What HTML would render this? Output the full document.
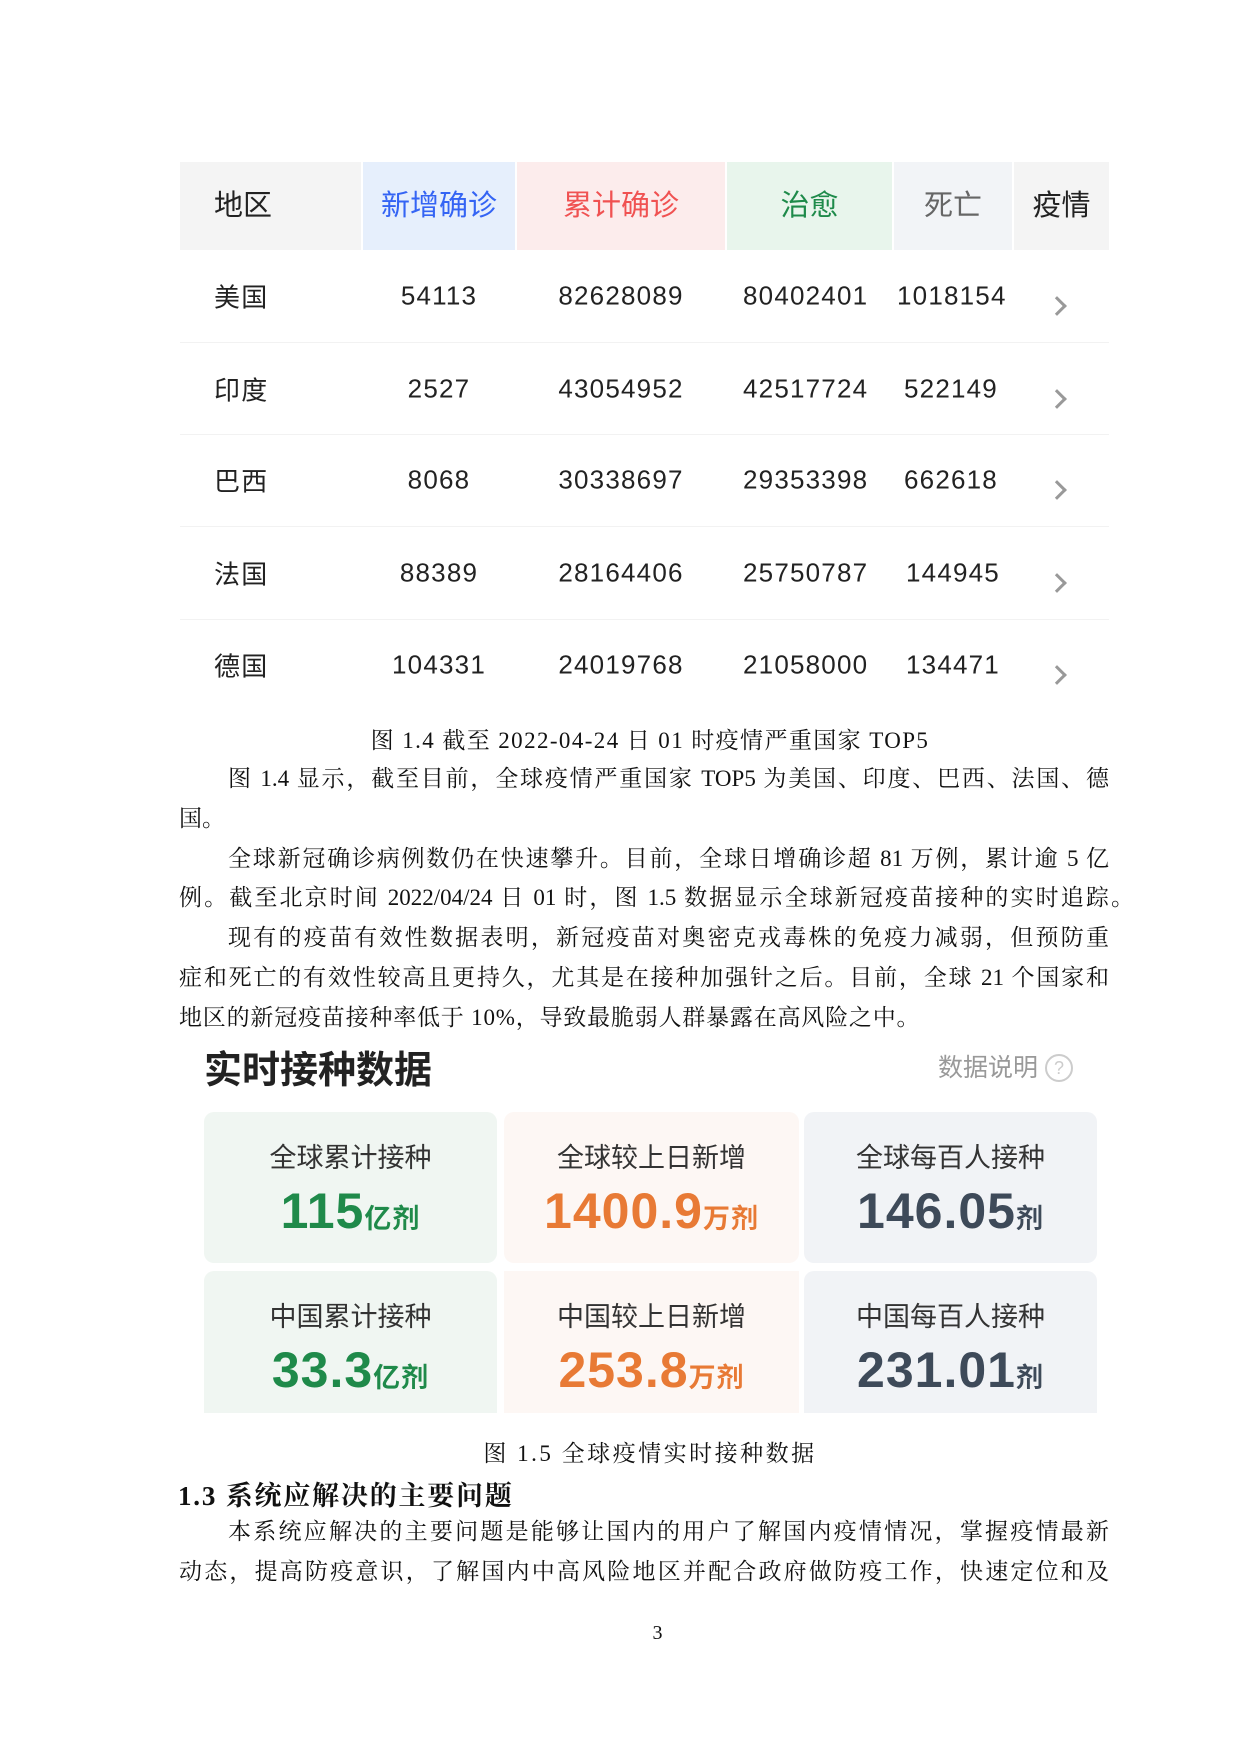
<!DOCTYPE html>
<html><head><meta charset="utf-8"><style>
body{margin:0;width:1240px;height:1754px;background:#fff;position:relative;overflow:hidden;font-family:"Liberation Sans","Noto Sans CJK SC",sans-serif}
.a{position:absolute;white-space:nowrap}
.h{position:absolute;top:162px;height:88px;line-height:88px;font-size:29px;text-align:center}
.c{position:absolute;font-size:26px;color:#222;transform:translateY(-50%);text-align:center;letter-spacing:1.2px}
.sep{position:absolute;left:180px;width:929px;height:1px;background:#f2f2f2}
.chev{position:absolute;left:1050px;width:11px;height:11px;border-right:3px solid #999;border-top:3px solid #999;transform:rotate(45deg)}
.serif{font-family:"Liberation Serif","Noto Serif CJK SC",serif;font-size:23px;color:#111}
.l{position:absolute;left:179px;width:930px;height:40px;line-height:40px;font-family:"Liberation Serif","Noto Serif CJK SC",serif;font-size:23px;color:#111;text-align:justify;text-align-last:justify;white-space:nowrap}
.l.i{left:228px;width:881px}
.l.n{text-align-last:left}
.card{position:absolute;border-radius:10px;text-align:center}
.lab{position:absolute;width:100%;top:24px;font-size:27px;color:#333}
.num{position:absolute;width:100%;top:70px;font-size:50px;font-weight:bold;letter-spacing:1px}
.num small{font-size:27px}
</style></head><body>
<div class="h" style="left:180px;width:181px;background:#f4f4f4;text-align:left;padding-left:34px;box-sizing:border-box;color:#222">地区</div>
<div class="h" style="left:363px;width:152px;background:#e6effc;color:#3464f4">新增确诊</div>
<div class="h" style="left:517px;width:208px;background:#fcecec;color:#f05252">累计确诊</div>
<div class="h" style="left:727px;width:165px;background:#e8f5ec;color:#1e8a4a">治愈</div>
<div class="h" style="left:894px;width:118px;background:#f2f4f7;color:#666">死亡</div>
<div class="h" style="left:1014px;width:95px;background:#f4f4f4;color:#222">疫情</div>

<div class="sep" style="top:342px"></div><div class="sep" style="top:434px"></div><div class="sep" style="top:526px"></div><div class="sep" style="top:619px"></div>

<div class="c" style="left:214px;top:296px">美国</div><div class="c" style="left:363px;width:152px;top:296px">54113</div><div class="c" style="left:517px;width:208px;top:296px">82628089</div><div class="c" style="left:743px;top:296px">80402401</div><div class="c" style="left:897px;top:296px">1018154</div><div class="chev" style="top:299px"></div>
<div class="c" style="left:214px;top:389px">印度</div><div class="c" style="left:363px;width:152px;top:389px">2527</div><div class="c" style="left:517px;width:208px;top:389px">43054952</div><div class="c" style="left:743px;top:389px">42517724</div><div class="c" style="left:904px;top:389px">522149</div><div class="chev" style="top:392px"></div>
<div class="c" style="left:214px;top:480px">巴西</div><div class="c" style="left:363px;width:152px;top:480px">8068</div><div class="c" style="left:517px;width:208px;top:480px">30338697</div><div class="c" style="left:743px;top:480px">29353398</div><div class="c" style="left:904px;top:480px">662618</div><div class="chev" style="top:483px"></div>
<div class="c" style="left:214px;top:573px">法国</div><div class="c" style="left:363px;width:152px;top:573px">88389</div><div class="c" style="left:517px;width:208px;top:573px">28164406</div><div class="c" style="left:743px;top:573px">25750787</div><div class="c" style="left:906px;top:573px">144945</div><div class="chev" style="top:576px"></div>
<div class="c" style="left:214px;top:665px">德国</div><div class="c" style="left:363px;width:152px;top:665px">104331</div><div class="c" style="left:517px;width:208px;top:665px">24019768</div><div class="c" style="left:743px;top:665px">21058000</div><div class="c" style="left:906px;top:665px">134471</div><div class="chev" style="top:668px"></div>

<div class="a serif" style="left:0;width:1300px;text-align:center;top:722px;letter-spacing:1.4px">图 1.4 截至 2022-04-24 日 01 时疫情严重国家 TOP5</div>
<div class="l i" style="top:759px">图 1.4 显示，截至目前，全球疫情严重国家 TOP5 为美国、印度、巴西、法国、德</div>
<div class="l n" style="top:799px">国。</div>
<div class="l i" style="top:839px">全球新冠确诊病例数仍在快速攀升。目前，全球日增确诊超 81 万例，累计逾 5 亿</div>
<div class="l" style="top:878px;width:955px">例。截至北京时间 2022/04/24 日 01 时，图 1.5 数据显示全球新冠疫苗接种的实时追踪。</div>
<div class="l i" style="top:918px">现有的疫苗有效性数据表明，新冠疫苗对奥密克戎毒株的免疫力减弱，但预防重</div>
<div class="l" style="top:958px">症和死亡的有效性较高且更持久，尤其是在接种加强针之后。目前，全球 21 个国家和</div>
<div class="l n" style="top:998px;letter-spacing:0.8px">地区的新冠疫苗接种率低于 10%，导致最脆弱人群暴露在高风险之中。</div>

<div class="a" style="left:204px;top:1039px;font-size:38px;font-weight:bold;color:#222">实时接种数据</div>
<div class="a" style="left:938px;top:1048px;font-size:25px;color:#999">数据说明 <span style="display:inline-block;width:24px;height:24px;border:2px solid #ccc;border-radius:50%;font-size:18px;line-height:24px;text-align:center;color:#ccc;vertical-align:2px">?</span></div>

<div class="card" style="left:204px;top:1112px;width:293px;height:151px;background:#f0f6f2"><div class="lab">全球累计接种</div><div class="num" style="color:#1f8a4a">115<small>亿剂</small></div></div>
<div class="card" style="left:504px;top:1112px;width:295px;height:151px;background:#fdf7f4"><div class="lab">全球较上日新增</div><div class="num" style="color:#e87a35">1400.9<small>万剂</small></div></div>
<div class="card" style="left:804px;top:1112px;width:293px;height:151px;background:#f1f3f6"><div class="lab">全球每百人接种</div><div class="num" style="color:#3e4a59">146.05<small>剂</small></div></div>
<div class="card" style="left:204px;top:1271px;width:293px;height:142px;background:#f0f6f2;border-radius:10px 10px 0 0"><div class="lab">中国累计接种</div><div class="num" style="color:#1f8a4a">33.3<small>亿剂</small></div></div>
<div class="card" style="left:504px;top:1271px;width:295px;height:142px;background:#fdf7f4;border-radius:0"><div class="lab">中国较上日新增</div><div class="num" style="color:#e87a35">253.8<small>万剂</small></div></div>
<div class="card" style="left:804px;top:1271px;width:293px;height:142px;background:#f1f3f6;border-radius:10px 10px 0 0"><div class="lab">中国每百人接种</div><div class="num" style="color:#3e4a59">231.01<small>剂</small></div></div>

<div class="a serif" style="left:0;width:1300px;text-align:center;top:1435px;letter-spacing:2.5px">图 1.5 全球疫情实时接种数据</div>
<div class="a" style="left:178px;top:1474px;font-family:'Liberation Serif','Noto Serif CJK SC',serif;font-size:27px;font-weight:bold;color:#111;letter-spacing:1.8px">1.3 系统应解决的主要问题</div>
<div class="l i" style="top:1512px">本系统应解决的主要问题是能够让国内的用户了解国内疫情情况，掌握疫情最新</div>
<div class="l" style="top:1552px">动态，提高防疫意识，了解国内中高风险地区并配合政府做防疫工作，快速定位和及</div>
<div class="a serif" style="left:0;width:1315px;text-align:center;top:1622px;font-size:20px">3</div>
</body></html>
